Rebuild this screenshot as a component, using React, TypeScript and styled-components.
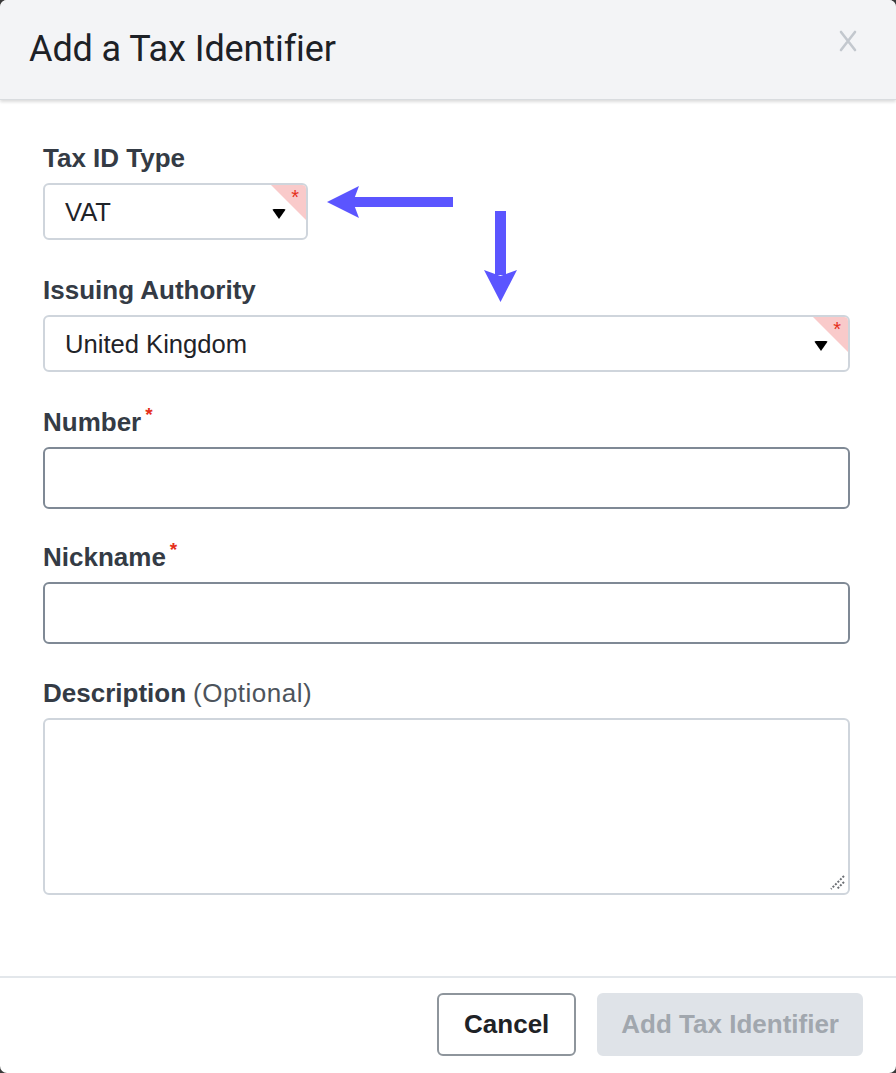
import React from "react";
import styled, { createGlobalStyle } from "styled-components";

const Global = createGlobalStyle`
  html, body { margin: 0; padding: 0; background: #3a3a3a; }
  body { font-family: "Liberation Sans", Arial, sans-serif; }
  * { box-sizing: border-box; }
`;

const Modal = styled.div`
  position: relative;
  width: 896px;
  height: 1073px;
  background: #ffffff;
  border-radius: 7px;
  overflow: hidden;
  display: flex;
  flex-direction: column;
`;

const Header = styled.div`
  height: 100px;
  flex: none;
  background: #f3f4f6;
  display: flex;
  align-items: center;
  justify-content: space-between;
  padding: 0 38px 0 29px;
  box-shadow: 0 2px 3px rgba(0, 0, 0, 0.14);
  border-bottom: 1px solid #d9dcdf;
  position: relative;
  z-index: 1;
`;

const Title = styled.h1`
  margin: 0;
  font-family: Roboto, "Liberation Sans", Arial, sans-serif;
  font-weight: 400;
  font-size: 36px;
  color: #1d2126;
  letter-spacing: -0.1px;
  transform: translateY(-1px);
`;

const Close = styled.button`
  border: 0;
  background: none;
  padding: 0;
  width: 20px;
  height: 22px;
  display: flex;
  align-items: center;
  justify-content: center;
  transform: translateY(-9px);
`;

const Body = styled.div`
  flex: 1;
  padding: 44px 46px 0 43px;
  display: flex;
  flex-direction: column;
`;

const Field = styled.div<{ $gap?: number }>`
  display: flex;
  flex-direction: column;
  margin-bottom: ${(p) => p.$gap ?? 36}px;
`;

const Label = styled.label`
  position: relative;
  font-size: 26px;
  line-height: 28px;
  height: 28px;
  font-weight: 700;
  color: #343b45;
  margin-bottom: 11px;
  display: flex;
  align-items: flex-start;
`;

const Optional = styled.span`
  font-weight: 400;
  color: #4d545c;
  margin-left: 7px;
  letter-spacing: 0.5px;
`;

const Req = styled.span`
  color: #e5301b;
  font-size: 19px;
  line-height: 19px;
  margin-left: 4px;
  margin-top: -3px;
`;

const Select = styled.div<{ $width?: string }>`
  position: relative;
  width: ${(p) => p.$width ?? "100%"};
  height: 57px;
  border: 2px solid #cfd5dc;
  border-radius: 6px;
  display: flex;
  align-items: center;
  padding: 0 20px 0 20px;
  font-size: 25.6px;
  color: #1f2328;
  overflow: hidden;
  background: #fff;
`;

const SelectText = styled.span`
  flex: 1;
  transform: translateY(1px);
`;

const Caret = styled.span`
  width: 0;
  height: 0;
  border-left: 7px solid transparent;
  border-right: 7px solid transparent;
  border-top: 10px solid #000;
  border-radius: 2px;
  margin-top: 4px;
`;

const Corner = styled.span`
  position: absolute;
  top: 0;
  right: 0;
  width: 0;
  height: 0;
  border-top: 35px solid #f9caca;
  border-left: 35px solid transparent;
`;

const CornerStar = styled.span`
  position: absolute;
  top: 2px;
  right: 7px;
  color: #e5301b;
  font-size: 20px;
  line-height: 20px;
`;

const Input = styled.div`
  height: 62px;
  border: 2px solid #7f8995;
  border-radius: 6px;
  background: #fff;
`;

const TextArea = styled.div`
  position: relative;
  height: 177px;
  border: 2px solid #cfd5dc;
  border-radius: 6px;
  background: #fff;
`;

const Grip = styled.svg`
  position: absolute;
  right: 2px;
  bottom: 2px;
`;

const Footer = styled.div`
  flex: none;
  height: 97px;
  border-top: 2px solid #e3e7eb;
  display: flex;
  justify-content: flex-end;
  align-items: center;
  gap: 21px;
  padding: 0 33px 2px 0;
`;

const Button = styled.button<{ $primary?: boolean }>`
  height: 63px;
  border-radius: 6px;
  font-family: "Liberation Sans", Arial, sans-serif;
  font-size: 26px;
  font-weight: 700;
  padding: 0 ${(p) => (p.$primary ? 22 : 25)}px;
  border: ${(p) => (p.$primary ? "2px solid #dfe3e8" : "2px solid #8e959c")};
  background: ${(p) => (p.$primary ? "#dfe3e8" : "#fff")};
  color: ${(p) => (p.$primary ? "#a1a7ae" : "#1e2226")};
`;

const Arrows = styled.svg`
  position: absolute;
  left: 320px;
  top: 180px;
  pointer-events: none;
  z-index: 2;
`;

export default function App() {
  return (
    <>
      <Global />
      <Modal>
        <Header>
          <Title>Add a Tax Identifier</Title>
          <Close aria-label="Close">
            <svg width="20" height="22" viewBox="0 0 20 22">
              <path d="M3 2 L17 20 M17 2 L3 20" stroke="#c3c8ce" strokeWidth="2.6" strokeLinecap="round" />
            </svg>
          </Close>
        </Header>
        <Body>
          <Field>
            <Label>Tax ID Type</Label>
            <Select $width="265px">
              <SelectText>VAT</SelectText>
              <Caret />
              <Corner />
              <CornerStar>*</CornerStar>
            </Select>
          </Field>
          <Field>
            <Label>Issuing Authority</Label>
            <Select>
              <SelectText>United Kingdom</SelectText>
              <Caret />
              <Corner />
              <CornerStar>*</CornerStar>
            </Select>
          </Field>
          <Field $gap={34}>
            <Label>
              Number<Req>*</Req>
            </Label>
            <Input />
          </Field>
          <Field $gap={35}>
            <Label>
              Nickname<Req>*</Req>
            </Label>
            <Input />
          </Field>
          <Field $gap={0}>
            <Label>
              Description<Optional>(Optional)</Optional>
            </Label>
            <TextArea>
              <Grip width="18" height="18" viewBox="0 0 18 18">
                <path d="M16 3 L3 16 M16 9 L9 16" stroke="#6b6f74" strokeWidth="2" strokeDasharray="2 1.5" />
              </Grip>
            </TextArea>
          </Field>
        </Body>
        <Footer>
          <Button>Cancel</Button>
          <Button $primary>Add Tax Identifier</Button>
        </Footer>
        <Arrows width="200" height="130" viewBox="0 0 200 130">
          <path d="M7 22 L39 6 L33 22 L39 38 Z" fill="#5b55ff" />
          <rect x="33" y="17" width="100" height="10" fill="#5b55ff" />
          <rect x="175" y="31" width="11" height="64" fill="#5b55ff" />
          <path d="M180.5 122 L164 90 L180.5 96 L197 90 Z" fill="#5b55ff" />
        </Arrows>
      </Modal>
    </>
  );
}
